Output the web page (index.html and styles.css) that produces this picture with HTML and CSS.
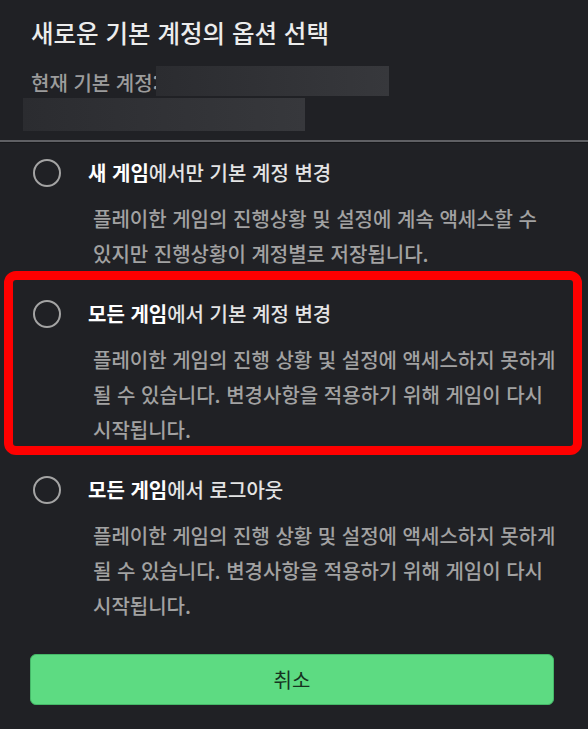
FILE: index.html
```html
<!DOCTYPE html>
<html lang="ko">
<head>
    <meta charset="UTF-8">
    <meta name="viewport" content="width=device-width, initial-scale=1.0">
    <title>기본 계정 옵션</title>
    <link rel="stylesheet" href="styles.css">
</head>
<body>
    <div class="sheet">
        <header class="sheet-header">
            <h1 class="sheet-title">새로운 기본 계정의 옵션 선택</h1>
            <p class="current-account">현재 기본 계정:</p>
            <!-- 계정 정보 가림 -->
            <span class="mask mask-id"></span>
            <span class="mask mask-mail"></span>
        </header>

        <ul class="options">
            <li class="option">
                <span class="radio"></span>
                <div class="option-body">
                    <div class="option-title"><b>새 게임</b>에서만 기본 계정 변경</div>
                    <p class="option-desc">플레이한 게임의 진행상황 및 설정에 계속 액세스할 수 있지만 진행상황이 계정별로 저장됩니다.</p>
                </div>
            </li>
            <li class="option highlighted">
                <span class="radio"></span>
                <div class="option-body">
                    <div class="option-title"><b>모든 게임</b>에서 기본 계정 변경</div>
                    <p class="option-desc">플레이한 게임의 진행 상황 및 설정에 액세스하지 못하게 될 수 있습니다. 변경사항을 적용하기 위해 게임이 다시 시작됩니다.</p>
                </div>
            </li>
            <li class="option">
                <span class="radio"></span>
                <div class="option-body">
                    <div class="option-title"><b>모든 게임</b>에서 로그아웃</div>
                    <p class="option-desc">플레이한 게임의 진행 상황 및 설정에 액세스하지 못하게 될 수 있습니다. 변경사항을 적용하기 위해 게임이 다시 시작됩니다.</p>
                </div>
            </li>
        </ul>

        <button class="cancel-btn">취소</button>
    </div>
</body>
</html>
```

FILE: styles.css
```css
body {
    margin: 0;
    background-color: #202125;
    font-family: 'Noto Sans CJK KR', 'Noto Sans', sans-serif;
    color: #e6e6e6;
}
.sheet {
    width: 588px;
    height: 729px;
    overflow: hidden;
}
.sheet-header {
    position: relative;
    padding: 17px 0 45px 31px;
    border-bottom: 2px solid #5f6064;
    box-shadow: 0 1px 0 #17181b;
}
.sheet-title {
    margin: 0;
    font-size: 24.5px;
    font-weight: 500;
    line-height: 31px;
    color: #ececec;
}
.current-account {
    margin: 23px 0 0;
    font-size: 20px;
    font-weight: 500;
    line-height: 24px;
    color: #9c9c9c;
}
.mask {
    position: absolute;
    background: linear-gradient(90deg, #2b2c30, #37383c);
}
.mask-id {
    left: 156px;
    top: 66px;
    width: 233px;
    height: 30px;
}
.mask-mail {
    left: 23px;
    top: 98px;
    width: 282px;
    height: 33px;
}
.options {
    list-style: none;
    margin: 0;
    padding: 0;
}
.option {
    position: relative;
    display: flex;
    align-items: flex-start;
    padding: 17px 26px 12px 33px;
}
.option.highlighted::before {
    content: '';
    position: absolute;
    top: -12px;
    bottom: 4px;
    left: 4px;
    right: 6px;
    border: 9px solid #fe0000;
    border-radius: 12px;
}
.radio {
    flex: none;
    box-sizing: border-box;
    width: 28px;
    height: 28px;
    border: 2.5px solid #a4a4a4;
    border-radius: 50%;
}
.option-body {
    margin-left: 27px;
}
.option-title {
    font-size: 20px;
    font-weight: 500;
    line-height: 28px;
    color: #e4e4e4;
}
.option-title b {
    font-weight: 700;
    color: #fff;
}
.option-desc {
    margin: 14px 0 0;
    padding-left: 5px;
    font-size: 20px;
    font-weight: 500;
    line-height: 35px;
    color: #a2a2a2;
    word-break: keep-all;
}
.cancel-btn {
    display: block;
    box-sizing: border-box;
    width: 524px;
    height: 51px;
    margin: 19px 0 0 30px;
    background-color: #5ddb82;
    border: 1px solid #45b868;
    border-radius: 6px;
    font-family: inherit;
    font-size: 20px;
    color: #16331f;
    cursor: pointer;
}
```
